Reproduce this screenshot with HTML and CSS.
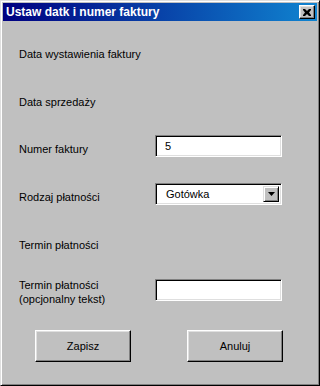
FILE: index.html
```html
<!DOCTYPE html>
<html lang="pl">
<head>
    <meta charset="UTF-8">
    <title>Ustaw datk i numer faktury</title>
    <link rel="stylesheet" href="styles.css">
</head>
<body>
    <div class="window">
        <!-- Title Bar -->
        <div class="titlebar">
            <span class="title">Ustaw datk i numer faktury</span>
            <button class="close-btn" aria-label="Zamknij">
                <svg width="8" height="7" viewBox="0 0 8 7">
                    <path d="M0 0h2l2 2 2-2h2v1L6 3.5 8 6v1H6L4 5 2 7H0V6l2-2.5L0 1z" fill="#000"/>
                </svg>
            </button>
        </div>

        <!-- Form -->
        <div class="form">
            <div class="label">Data wystawienia faktury</div>
            <div></div>

            <div class="label">Data sprzedaży</div>
            <div></div>

            <div class="label">Numer faktury</div>
            <div><input class="field" type="text" value="5"></div>

            <div class="label">Rodzaj płatności</div>
            <div class="combo">
                <span class="combo-text">Gotówka</span>
                <span class="combo-btn">
                    <svg width="7" height="4" viewBox="0 0 7 4"><path d="M0 0h7L3.5 4z" fill="#000"/></svg>
                </span>
            </div>

            <div class="label">Termin płatności</div>
            <div></div>

            <div class="label label-top">Termin płatności<br>(opcjonalny tekst)</div>
            <div><input class="field field-low" type="text" value=""></div>
        </div>

        <!-- Buttons -->
        <div class="buttons">
            <button class="btn">Zapisz</button>
            <button class="btn">Anuluj</button>
        </div>
    </div>
</body>
</html>
```

FILE: styles.css
```css
/* General Page Styling */
body {
    margin: 0;
    background-color: #c0c0c0;
    font-family: 'Liberation Sans', Arial, sans-serif;
    font-size: 11px;
    color: #000;
}

/* Window Frame */
.window {
    width: 320px;
    height: 386px;
    box-sizing: border-box;
    padding: 2px;
    background-color: #c0c0c0;
    border: 1px solid;
    border-color: #dfdfdf #000 #000 #dfdfdf;
    box-shadow: inset 1px 1px #fff, inset -1px -1px #808080;
}

/* Title Bar */
.titlebar {
    height: 18px;
    display: flex;
    align-items: center;
    justify-content: space-between;
    padding: 0 2px 0 3px;
    background: linear-gradient(to right, #000080, #1084d0);
}

.title {
    color: #fff;
    font-weight: bold;
    font-size: 12px;
    line-height: 18px;
}

.close-btn {
    width: 16px;
    height: 14px;
    padding: 0;
    display: flex;
    align-items: center;
    justify-content: center;
    background-color: #c0c0c0;
    border: 1px solid;
    border-color: #fff #000 #000 #fff;
    box-shadow: inset -1px -1px #808080, inset 1px 1px #dfdfdf;
}

/* Form Grid */
.form {
    display: grid;
    grid-template-columns: 136px 127px;
    grid-template-rows: 48px 47px 48px 48px 47px 28px;
    padding: 19px 0 0 16px;
}

.label {
    padding-top: 7px;
    line-height: 14px;
}

.label-top {
    padding-top: 0;
}

/* Inputs */
.field {
    width: 127px;
    height: 22px;
    box-sizing: border-box;
    margin: 0;
    padding: 0 0 0 9px;
    font-family: 'Liberation Sans', Arial, sans-serif;
    font-size: 11px;
    background-color: #fff;
    border: 1px solid;
    border-color: #808080 #fff #fff #808080;
    box-shadow: inset 1px 1px #000, inset -1px -1px #dfdfdf;
    outline: none;
}

.field-low {
    margin-top: 1px;
}

/* Combo Box */
.combo {
    width: 127px;
    height: 22px;
    box-sizing: border-box;
    display: flex;
    align-items: center;
    justify-content: space-between;
    padding: 2px;
    background-color: #fff;
    border: 1px solid;
    border-color: #808080 #fff #fff #808080;
    box-shadow: inset 1px 1px #000, inset -1px -1px #dfdfdf;
}

.combo-text {
    padding-left: 8px;
}

.combo-btn {
    width: 16px;
    height: 16px;
    box-sizing: border-box;
    display: flex;
    align-items: center;
    justify-content: center;
    background-color: #c0c0c0;
    border: 1px solid;
    border-color: #dfdfdf #000 #000 #dfdfdf;
    box-shadow: inset 1px 1px #fff, inset -1px -1px #808080;
}

/* Buttons */
.buttons {
    display: flex;
    gap: 56px;
    padding: 24px 0 0 32px;
}

.btn {
    width: 96px;
    height: 32px;
    padding: 0;
    font-family: 'Liberation Sans', Arial, sans-serif;
    font-size: 11px;
    color: #000;
    background-color: #c0c0c0;
    border: 1px solid;
    border-color: #fff #000 #000 #fff;
    box-shadow: inset -1px -1px #808080, inset 1px 1px #dfdfdf;
}
```
